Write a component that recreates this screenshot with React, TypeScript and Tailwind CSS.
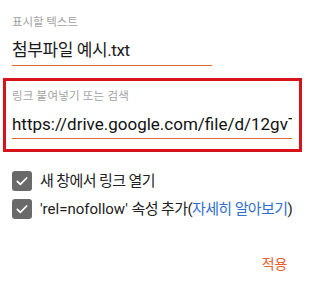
import React from 'react'

const kr = "font-['Roboto','Noto_Sans_CJK_KR',sans-serif]"

function Check() {
  return (
    <span className="flex h-[20px] w-[20px] shrink-0 items-center justify-center rounded-[3px] bg-[#6a6a6a]">
      <svg viewBox="0 0 24 24" className="h-[16px] w-[16px]" fill="none" stroke="#fff" strokeWidth="2.6" strokeLinecap="round" strokeLinejoin="round">
        <path d="M5 12.5l4.5 4.5L19 7.5" />
      </svg>
    </span>
  )
}

export default function App() {
  return (
    <div className={`h-[291px] w-[313px] bg-white ${kr}`}>
      {/* 표시할 텍스트 */}
      <div className="px-[12px] pt-[15px]">
        <div className="text-[11.5px] leading-[14px] tracking-[-0.1px] text-[#a3a3a3]">표시할 텍스트</div>
        <div className="mt-[11px] w-[200px] border-b border-[#e0672f] pb-[4px] text-[17px] leading-[21px] tracking-[-0.4px] text-[#1c1c1c]">
          첨부파일 예시.txt
        </div>
      </div>

      {/* 링크 */}
      <div className="ml-[3px] mt-[12px] w-[299px] border-[3px] border-[#d7141a] pb-[10px] pl-[6px] pr-[7px] pt-[8px]">
        <div className="text-[11.5px] leading-[14px] tracking-[0.2px] text-[#a3a3a3]">링크 붙여넣기 또는 검색</div>
        <div className="mt-[11px] overflow-hidden whitespace-nowrap border-b border-[#e0672f] pb-[3px] text-[17px] leading-[21px] text-[#111]">
          https://drive.google.com/file/d/12gvT
        </div>
      </div>

      {/* 옵션 */}
      <div className="mt-[19px] flex flex-col gap-[8px] px-[12px]">
        <label className="flex items-center gap-[8px]">
          <Check />
          <span className="text-[15px] leading-[20px] tracking-[-0.6px] text-[#222]">새 창에서 링크 열기</span>
        </label>
        <label className="flex items-center gap-[8px]">
          <Check />
          <span className="whitespace-nowrap text-[15px] leading-[20px] text-[#222]">
            'rel=nofollow' <span className="tracking-[-0.6px]">속성 추가(</span>
            <span className="tracking-[-0.6px] text-[#2f6fd0]">자세히 알아보기</span>)
          </span>
        </label>
      </div>

      <div className="mt-[36px] flex justify-end pr-[26px]">
        <span className="text-[14px] leading-[18px] tracking-[-0.3px] text-[#e4602f]">적용</span>
      </div>
    </div>
  )
}
